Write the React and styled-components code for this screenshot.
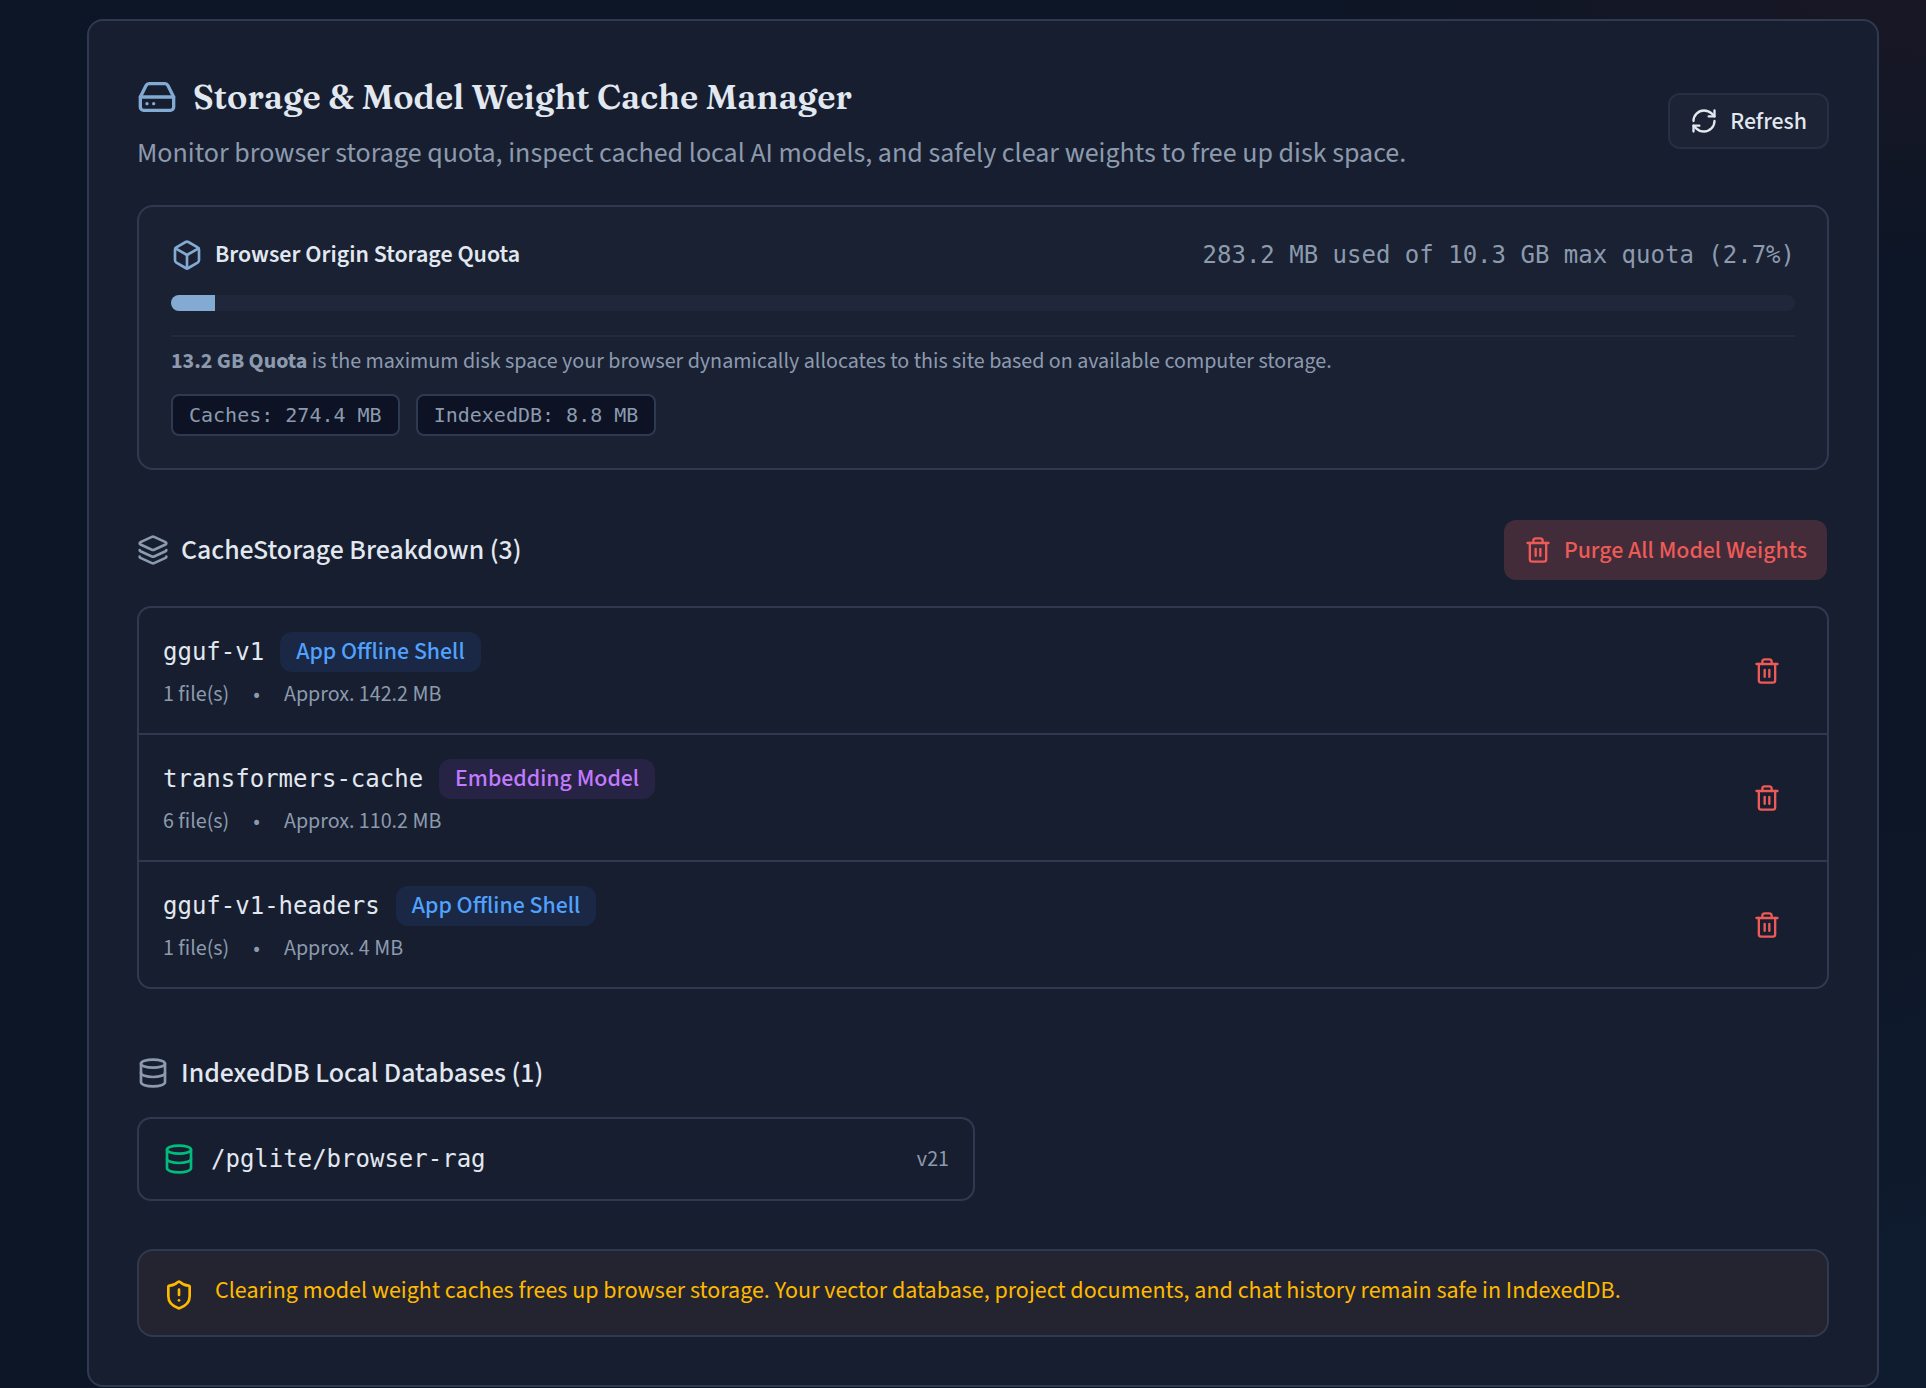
import React from 'react';
import styled, { createGlobalStyle } from 'styled-components';
import { Box, Database, HardDrive, Layers, RefreshCw, ShieldAlert, Trash2 } from 'lucide-react';

const sans = `'Source Sans 3', 'Source Sans Pro', 'Noto Sans CJK SC', 'Noto Sans', sans-serif`;
const mono = `'DejaVu Sans Mono', monospace`;

const GlobalStyle = createGlobalStyle`
  * {
    box-sizing: border-box;
  }

  body {
    margin: 0;
    min-height: 100vh;
    color: #e2e8f0;
    font-family: ${sans};
    background:
      radial-gradient(ellipse 600px 260px at 100% 0%, #191725 0%, transparent 100%),
      radial-gradient(ellipse 400px 600px at 100% 100%, #0f1c30 0%, transparent 100%),
      #0d1626;
  }

  h1, h2, h3, p, ul {
    margin: 0;
    padding: 0;
  }

  svg {
    flex-shrink: 0;
  }
`;

const Page = styled.div`
  padding: 19px 47px 0 87px;
`;

const Card = styled.main`
  display: flex;
  flex-direction: column;
  padding: 48px;
  background: #171e2f;
  border: 2px solid #2f3a50;
  border-radius: 16px;
`;

const Header = styled.header`
  display: flex;
  align-items: center;
  justify-content: space-between;
  margin-bottom: 32px;
`;

const Title = styled.h1`
  display: flex;
  align-items: center;
  gap: 16px;
  font-family: 'Fraunces', 'Liberation Serif', serif;
  font-size: 34px;
  font-weight: 600;
  line-height: 56px;

  svg {
    color: #83aad2;
  }
`;

const Subtitle = styled.p`
  margin-top: 8px;
  font-size: 28px;
  line-height: 40px;
  color: #8c9aae;
`;

const RefreshButton = styled.button`
  display: flex;
  align-items: center;
  gap: 12px;
  height: 56px;
  padding: 0 20px;
  font-family: inherit;
  font-size: 24px;
  font-weight: 500;
  color: #e2e8f0;
  background: #1b2335;
  border: 2px solid #262f43;
  border-radius: 12px;
  cursor: pointer;
`;

const QuotaBox = styled.section`
  padding: 32px;
  margin-bottom: 48px;
  background: #1a2133;
  border: 2px solid #2f3a50;
  border-radius: 16px;
`;

const QuotaHeader = styled.div`
  display: flex;
  align-items: center;
  justify-content: space-between;
  margin-bottom: 24px;
`;

const QuotaTitle = styled.h2`
  display: flex;
  align-items: center;
  gap: 12px;
  font-size: 24px;
  font-weight: 600;
  line-height: 32px;

  svg {
    color: #83aad2;
  }
`;

const QuotaUsage = styled.span`
  font-family: ${mono};
  font-size: 24px;
  line-height: 32px;
  color: #8c9aae;
`;

const Track = styled.div`
  height: 16px;
  overflow: hidden;
  background: #20273b;
  border-radius: 8px;
`;

const Fill = styled.div`
  height: 100%;
  background: #83aad2;
`;

const QuotaDetails = styled.div`
  margin-top: 24px;
  padding-top: 8px;
  border-top: 2px solid #212b3e;
`;

const QuotaNote = styled.p`
  font-size: 22px;
  line-height: 33px;
  color: #8c9aae;
`;

const Chips = styled.div`
  display: flex;
  gap: 16px;
  margin-top: 16px;
`;

const Chip = styled.span`
  padding: 3px 16px;
  font-family: ${mono};
  font-size: 20px;
  line-height: 32px;
  color: #8c9aae;
  background: #0d1324;
  border: 2px solid #2f3a50;
  border-radius: 8px;
`;

const SectionHeader = styled.div`
  display: flex;
  align-items: center;
  justify-content: space-between;
  margin-bottom: 24px;
`;

const SectionTitle = styled.h2`
  display: flex;
  align-items: center;
  gap: 12px;
  font-size: 28px;
  font-weight: 500;
  line-height: 40px;

  svg {
    color: #8c9aae;
  }
`;

const PurgeButton = styled.button`
  display: flex;
  align-items: center;
  gap: 12px;
  height: 64px;
  padding: 0 20px;
  font-family: inherit;
  font-size: 24px;
  font-weight: 500;
  color: #ee5a57;
  background: #422c39;
  background-clip: padding-box;
  border: 2px solid transparent;
  border-radius: 14px;
  cursor: pointer;
`;

const CacheList = styled.ul`
  margin-bottom: 64px;
  list-style: none;
  border: 2px solid #2f3a50;
  border-radius: 14px;
`;

const CacheItem = styled.li`
  display: flex;
  align-items: center;
  justify-content: space-between;
  padding: 24px;

  & + & {
    border-top: 2px solid #2f3a50;
  }
`;

const CacheName = styled.div`
  display: flex;
  align-items: center;
  gap: 16px;
  font-family: ${mono};
  font-size: 24px;
`;

const Badge = styled.span`
  padding: 0 16px;
  font-family: ${sans};
  font-size: 24px;
  font-weight: 500;
  line-height: 40px;
  border-radius: 12px;
  color: ${({ $kind }) => ($kind === 'embedding' ? '#c27aff' : '#51a2ff')};
  background: ${({ $kind }) => ($kind === 'embedding' ? '#272344' : '#1a2845')};
`;

const CacheMeta = styled.div`
  display: flex;
  gap: 24px;
  margin-top: 8px;
  font-size: 22px;
  line-height: 29px;
  color: #8c9aae;
`;

const DeleteButton = styled.button`
  display: flex;
  align-items: center;
  justify-content: center;
  width: 72px;
  height: 64px;
  padding: 0;
  color: #ee5a57;
  background: transparent;
  border: 0;
  border-radius: 12px;
  cursor: pointer;
`;

const DatabaseGrid = styled.div`
  display: grid;
  grid-template-columns: 1fr 1fr;
  gap: 16px;
  margin-bottom: 48px;
`;

const DatabaseCard = styled.div`
  display: flex;
  align-items: center;
  gap: 16px;
  padding: 24px;
  border: 2px solid #2f3a50;
  border-radius: 14px;

  svg {
    color: #00bc7d;
  }
`;

const DatabaseName = styled.span`
  flex: 1;
  font-family: ${mono};
  font-size: 24px;
  line-height: 32px;
`;

const Version = styled.span`
  font-size: 22px;
  line-height: 32px;
  color: #8c9aae;
`;

const Notice = styled.div`
  display: flex;
  align-items: flex-start;
  gap: 20px;
  padding: 24px;
  color: #feb900;
  background: #23242f;
  border: 2px solid #2f3a50;
  border-radius: 16px;

  svg {
    margin-top: 4px;
  }
`;

const NoticeText = styled.p`
  font-size: 24px;
  line-height: 32px;
`;

const usedPercent = 2.7;

const caches = [
  { name: 'gguf-v1', kind: 'shell', label: 'App Offline Shell', files: 1, size: '142.2 MB' },
  { name: 'transformers-cache', kind: 'embedding', label: 'Embedding Model', files: 6, size: '110.2 MB' },
  { name: 'gguf-v1-headers', kind: 'shell', label: 'App Offline Shell', files: 1, size: '4 MB' }
];

const databases = [{ name: '/pglite/browser-rag', version: 21 }];

const App = () => {
  return (
    <Page>
      <GlobalStyle />
      <Card>
        <Header>
          <div>
            <Title>
              <HardDrive size={40} />
              Storage &amp; Model Weight Cache Manager
            </Title>
            <Subtitle>
              Monitor browser storage quota, inspect cached local AI models, and safely clear weights to free up disk space.
            </Subtitle>
          </div>
          <RefreshButton type="button">
            <RefreshCw size={28} />
            Refresh
          </RefreshButton>
        </Header>

        <QuotaBox>
          <QuotaHeader>
            <QuotaTitle>
              <Box size={32} />
              Browser Origin Storage Quota
            </QuotaTitle>
            <QuotaUsage>283.2 MB used of 10.3 GB max quota ({usedPercent}%)</QuotaUsage>
          </QuotaHeader>
          <Track>
            <Fill style={{ width: `${usedPercent}%` }} />
          </Track>
          <QuotaDetails>
            <QuotaNote>
              <strong>13.2 GB Quota</strong> is the maximum disk space your browser dynamically allocates to this site based on available computer storage.
            </QuotaNote>
            <Chips>
              <Chip>Caches: 274.4 MB</Chip>
              <Chip>IndexedDB: 8.8 MB</Chip>
            </Chips>
          </QuotaDetails>
        </QuotaBox>

        <SectionHeader>
          <SectionTitle>
            <Layers size={32} />
            CacheStorage Breakdown ({caches.length})
          </SectionTitle>
          <PurgeButton type="button">
            <Trash2 size={28} />
            Purge All Model Weights
          </PurgeButton>
        </SectionHeader>
        <CacheList>
          {caches.map((cache) => (
            <CacheItem key={cache.name}>
              <div>
                <CacheName>
                  {cache.name}
                  <Badge $kind={cache.kind}>{cache.label}</Badge>
                </CacheName>
                <CacheMeta>
                  <span>{cache.files} file(s)</span>
                  <span>•</span>
                  <span>Approx. {cache.size}</span>
                </CacheMeta>
              </div>
              <DeleteButton type="button" aria-label={`Delete ${cache.name}`}>
                <Trash2 size={28} />
              </DeleteButton>
            </CacheItem>
          ))}
        </CacheList>

        <SectionHeader>
          <SectionTitle>
            <Database size={32} />
            IndexedDB Local Databases ({databases.length})
          </SectionTitle>
        </SectionHeader>
        <DatabaseGrid>
          {databases.map((db) => (
            <DatabaseCard key={db.name}>
              <Database size={32} />
              <DatabaseName>{db.name}</DatabaseName>
              <Version>v{db.version}</Version>
            </DatabaseCard>
          ))}
        </DatabaseGrid>

        <Notice>
          <ShieldAlert size={32} />
          <NoticeText>
            Clearing model weight caches frees up browser storage. Your vector database, project documents, and chat history remain safe in IndexedDB.
          </NoticeText>
        </Notice>
      </Card>
    </Page>
  );
};

export default App;
